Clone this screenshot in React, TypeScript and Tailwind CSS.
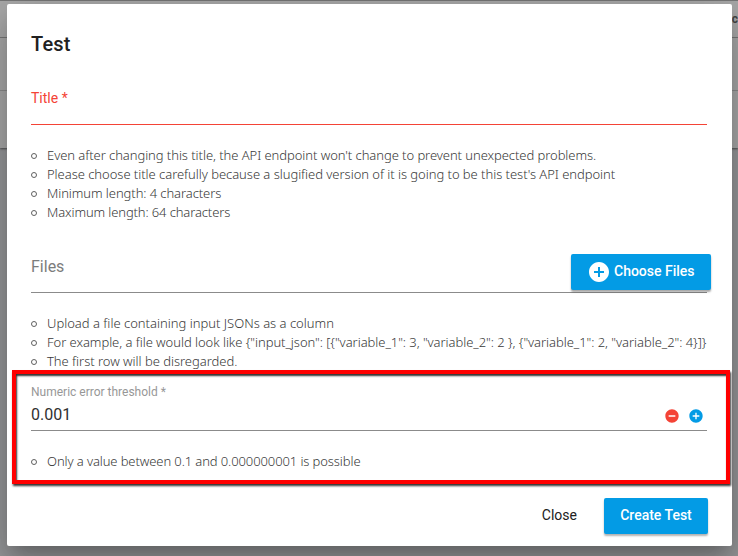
import React from 'react';

interface HintListProps {
  items: { text: string; className?: string }[];
}

const HintList: React.FC<HintListProps> = ({ items }) => (
  <ul className="font-['Noto_Sans','Open_Sans',sans-serif] text-[13px] leading-[19px] font-light text-[#383838]">
    {items.map(item => (
      <li key={item.text} className="flex items-center whitespace-pre">
        <span className="mr-[10px] h-[6px] w-[6px] shrink-0 rounded-full border-[1.5px] border-[#606060]" />
        <span className={item.className}>{item.text}</span>
      </li>
    ))}
  </ul>
);

const PlusCircle: React.FC<{ className: string }> = ({ className }) => (
  <svg viewBox="0 0 24 24" fill="currentColor" className={className}>
    <path d="M12 2C6.48 2 2 6.48 2 12s4.48 10 10 10 10-4.48 10-10S17.52 2 12 2zm5 11h-4v4h-2v-4H7v-2h4V7h2v4h4v2z" />
  </svg>
);

const MinusCircle: React.FC<{ className: string }> = ({ className }) => (
  <svg viewBox="0 0 24 24" fill="currentColor" className={className}>
    <path d="M12 2C6.48 2 2 6.48 2 12s4.48 10 10 10 10-4.48 10-10S17.52 2 12 2zm5 11H7v-2h10v2z" />
  </svg>
);

const titleHints = [
  {
    text: "Even after changing this title, the API endpoint won't change to prevent unexpected problems.",
    className: 'tracking-[-0.06px]',
  },
  {
    text: "Please choose title carefully because a slugified version of it is going to be this test's API endpoint",
    className: 'tracking-[-0.04px]',
  },
  { text: 'Minimum length: 4 characters', className: 'tracking-[-0.08px]' },
  { text: 'Maximum length: 64 characters', className: 'tracking-[-0.12px]' },
];

const fileHints = [
  { text: 'Upload a file containing input JSONs as a column' },
  {
    text: 'For example, a file would look like {"input_json": [{"variable_1": 3, "variable_2": 2 }, {"variable_1": 2, "variable_2": 4}]}',
    className: 'tracking-[-0.05px]',
  },
  { text: 'The first row will be disregarded.', className: 'tracking-[-0.03px]' },
];

const thresholdHints = [
  { text: 'Only a value between 0.1 and 0.000000001 is possible', className: 'tracking-[-0.1px]' },
];

const App: React.FC = () => {
  return (
    <div className="relative h-[556px] w-[738px] overflow-hidden bg-[#97989a] font-[Roboto,sans-serif]">
      {/* Dimmed table behind the dialog */}
      <div className="border-t border-[#777] bg-[#a9a9a9] shadow-[0_1px_2px_rgba(0,0,0,0.5)]">
        <div className="flex h-[37px] items-center justify-end border-b border-[#777] text-xs font-bold text-[#454545]">
          <span>c</span>
        </div>
        <div className="h-[53px] border-b border-[#8b8b8b]" />
        <div className="h-[57px]" />
      </div>

      {/* Dialog */}
      <div className="absolute left-[7px] top-1 flex h-[542px] w-[725px] flex-col rounded-[2px] bg-white pr-[25px] pl-6 shadow-[0_11px_15px_-7px_rgba(0,0,0,0.2),0_24px_38px_3px_rgba(0,0,0,0.14),0_9px_46px_8px_rgba(0,0,0,0.12)]">
        <h2 className="pt-6 text-[20px] leading-8 font-medium tracking-[0.15px] text-[#212121]">Test</h2>

        <div className="mt-7 h-[37px] border-b border-[#f44336]">
          <label className="block text-sm leading-[20px] text-[#f44336]">Title *</label>
        </div>
        <div className="mt-[21px]">
          <HintList items={titleHints} />
        </div>

        <div className="mt-8 flex h-[39px] items-start justify-between border-b border-[#8b8b8b]">
          <label className="pt-px text-base leading-6 text-[#7c7c7c]">Files</label>
          <button className="-mr-1 flex h-9 w-[140px] shrink-0 items-center rounded-[2px] bg-[#039be5] pb-[2px] pl-4 text-sm font-medium text-white shadow-[0_2px_2px_rgba(0,0,0,0.35)]">
            <PlusCircle className="mr-[3px] h-6 w-6 translate-y-px" />
            Choose Files
          </button>
        </div>
        <div className="mt-[21px]">
          <HintList items={fileHints} />
        </div>

        <div className="mt-[14px] h-[46px] border-b border-[#8b8b8b]">
          <label className="block text-xs leading-[14px] text-[#979797]">Numeric error threshold *</label>
          <div className="mt-1 flex h-6 items-center justify-between">
            <span className="text-base text-[#303030]">0.001</span>
            <div className="mt-[2px] mr-[3.5px] flex gap-2">
              <MinusCircle className="h-4 w-4 text-[#f44336]" />
              <PlusCircle className="h-4 w-4 text-[#039be5]" />
            </div>
          </div>
        </div>
        <div className="mt-[21px]">
          <HintList items={thresholdHints} />
        </div>

        <div className="mt-[27px] -mr-px flex justify-end gap-[27px] text-sm font-medium">
          <button className="pb-[2px] font-normal text-[#212121]">Close</button>
          <button className="h-9 w-[104px] rounded-[2px] bg-[#039be5] pb-[2px] text-white shadow-[0_2px_2px_rgba(0,0,0,0.3)]">Create Test</button>
        </div>
      </div>

      {/* Highlight frame */}
      <div className="pointer-events-none absolute left-3 top-[370px] h-[114px] w-[718px] border-4 border-[#ff0000] shadow-[1px_2px_2px_#333,inset_1px_2px_2px_#333]" />
    </div>
  );
};

export default App;
